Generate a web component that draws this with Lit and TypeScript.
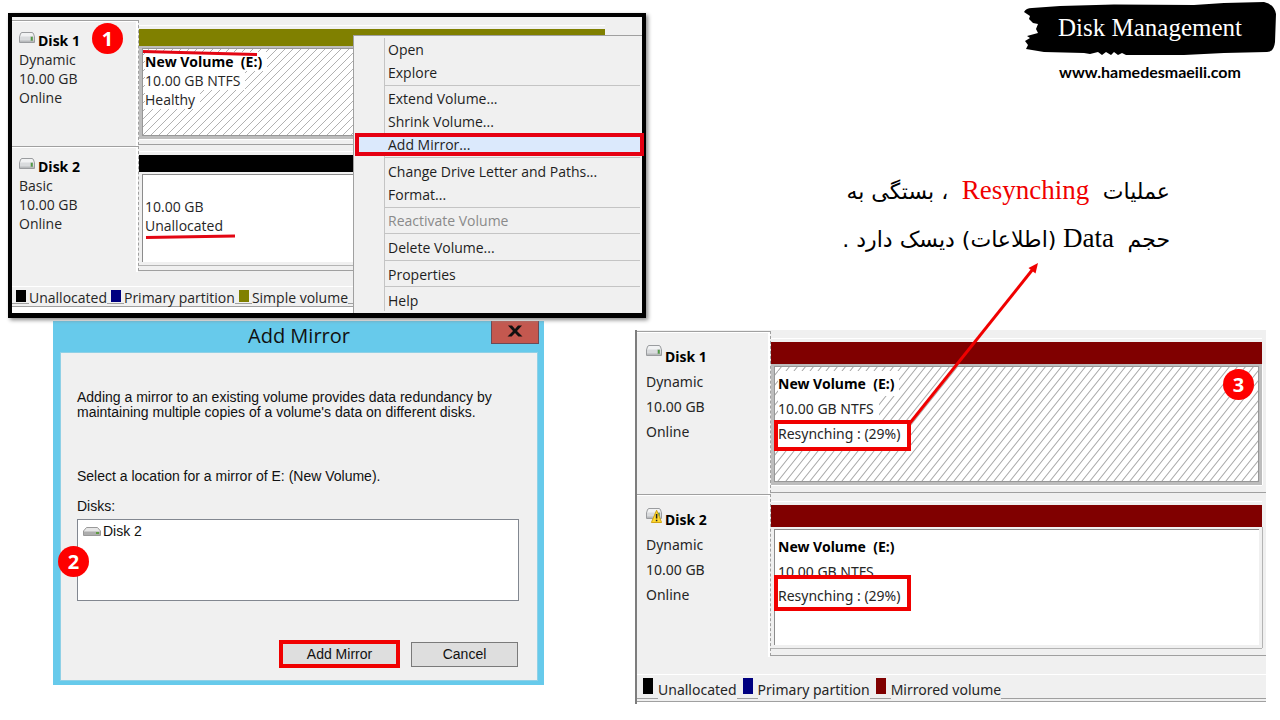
import { LitElement, html, svg, css, nothing } from "lit";
import { customElement, property } from "lit/decorators.js";

interface Volume {
  name?: string;
  size: string;
  status: string;
  color: string;
  selected?: boolean;
  mark?: "tight" | "tall";
}

interface Disk {
  title: string;
  kind: string;
  size: string;
  state: string;
  warning?: boolean;
  volume: Volume;
}

interface LegendEntry {
  label: string;
  color: string;
}

const driveIcon = (warning = false) => html`
  <svg class="drive" viewBox="0 0 16 16" width="16" height="16" aria-hidden="true">
    <path d="M3 1.5H13Q14 1.5 14.6 3L15.5 6V11.5H0.5V6L1.4 3Q2 1.5 3 1.5Z" fill="#f1f2f3" stroke="#9a9c9f" />
    <path d="M1 5.5H15V11H1Z" fill="#d9dbdd" />
    <path d="M1 9.5H15V11H1Z" fill="#b8babc" />
    <rect x="11.5" y="5.5" width="2.5" height="4.5" fill="#8fa88b" />
    <rect x="12.2" y="6" width="1.2" height="3.4" fill="#3f9a34" />
    ${warning
      ? svg`<path d="M10.6 3.2L15.6 15.5H5.4Z" fill="#ffd92e" stroke="#d3a514" stroke-linejoin="round" />
            <path d="M10.6 7V11.6M10.6 12.8V14.2" stroke="#222" stroke-width="1.5" />`
      : nothing}
  </svg>
`;

@customElement("disk-pane")
export class DiskPane extends LitElement {
  @property({ attribute: false }) disks: Disk[] = [];
  @property({ attribute: false }) legend: LegendEntry[] = [];

  static styles = css`
    :host {
      display: block;
      background: #f0f0f0;
      color: #262626;
      font-family: var(--face, "Open Sans", "Noto Sans", sans-serif);
      font-size: 14px;
      line-height: var(--line, 19px);
      white-space: nowrap;
    }
    .row {
      display: grid;
      grid-template-columns: var(--label, 126px) minmax(0, 1fr);
      height: var(--row, 126px);
    }
    .label {
      box-sizing: border-box;
      border-top: 1px solid #a0a0a0;
      box-shadow: inset 0 1px 0 #fff, inset -3px 0 0 -1px #fff;
      padding: var(--label-top, 10px) 0 0 var(--label-left, 7px);
    }
    .title {
      display: flex;
      gap: 3px;
      font-weight: bold;
      color: #000;
    }
    .drive {
      flex: none;
    }
    .graph {
      box-sizing: border-box;
      border-left: 1px dashed #a0a0a0;
      border-bottom: 1px solid #a0a0a0;
      height: calc(100% - 1px);
      padding: var(--graph-top, 9px) var(--graph-right, 4px) 0 0;
      position: relative;
    }
    .graph::before {
      content: "";
      display: block;
      height: 1px;
      margin-top: -4px;
      margin-bottom: 3px;
      background: #fff;
    }
    .bar {
      height: var(--bar, 17px);
    }
    .volume {
      box-sizing: border-box;
      height: var(--volume, 93px);
      border: 1px solid #f0f0f0;
      border-width: 2px 3px 3px 3px;
      background-color: #fff;
      box-shadow: inset 1px 1px 0 #8c8c8c, 0 1px 0 #b4b4b4, 1px 0 0 #b4b4b4;
      padding: var(--volume-top, 4px) 4px 0 var(--volume-left, 3px);
      color: #262626;
    }
    .selected {
      border-color: #bdbdbd;
      box-shadow: inset 0 0 0 1px #979797, 0 1px 0 #fff, 1px 0 0 #fff;
      background-image: url("data:image/svg+xml,%3Csvg xmlns='http://www.w3.org/2000/svg' viewBox='0 0 8 8' preserveAspectRatio='none'%3E%3Cpath d='M-1 9L9 -1M-1 1L1 -1M7 9L9 7' stroke='%23a8a8a8' stroke-width='0.9'/%3E%3C/svg%3E");
      background-size: 8px var(--hatch, 8px);
    }
    .line {
      display: block;
      width: max-content;
      height: var(--line, 19px);
      padding-right: 5px;
      background: #fff;
    }
    .name {
      font-weight: bold;
      color: #000;
      white-space: pre;
    }
    .tight,
    .tall {
      position: relative;
      box-sizing: border-box;
      width: 137px;
      height: 31px;
      border: 4px solid #f00000;
      margin: -1px 0 0 -4px;
      line-height: 19px;
    }
    .tall {
      height: 36px;
      margin-top: -9px;
      padding-top: 7px;
    }
    .legend {
      display: flex;
      align-items: flex-start;
      gap: var(--legend-gap, 4px);
      margin-top: var(--legend-top, 14px);
      padding-left: var(--legend-left, 4px);
      border-top: 1px solid #fff;
      background: linear-gradient(#a0a0a0, #a0a0a0) 0 calc(100% - 2px) / 100% 1px no-repeat;
      border-bottom: 1px solid #a0a0a0;
      height: var(--legend, 19px);
      line-height: var(--legend-line, 21px);
    }
    .entry {
      display: flex;
      gap: var(--legend-space, 3px);
      height: 100%;
    }
    .swatch {
      width: 10px;
      height: var(--swatch-height, 12px);
      margin-top: 3px;
    }
    .text {
      background: #f0f0f0;
    }
  `;

  private renderVolume(v: Volume) {
    return html`
      <div class="bar" style="background:${v.color}"></div>
      <div class="volume ${v.selected ? "selected" : ""}">
        <span class="line name">${v.name ?? " "}</span>
        <span class="line">${v.size}</span>
        <span class="line ${v.mark ?? ""}">${v.status}</span>
      </div>
    `;
  }

  render() {
    return html`
      ${this.disks.map(
        (d) => html`
          <section class="row">
            <div class="label">
              <div class="title">${driveIcon(d.warning)}<span>${d.title}</span></div>
              <div>${d.kind}</div>
              <div>${d.size}</div>
              <div>${d.state}</div>
            </div>
            <div class="graph">${this.renderVolume(d.volume)}</div>
          </section>
        `
      )}
      <div class="legend">
        ${this.legend.map(
          (e) => html`
            <div class="entry">
              <span class="swatch" style="background:${e.color}"></span>
              <span class="text">${e.label}</span>
            </div>
          `
        )}
      </div>
    `;
  }
}

@customElement("volume-menu")
export class VolumeMenu extends LitElement {
  static styles = css`
    :host {
      box-sizing: border-box;
      display: flex;
      flex-direction: column;
      padding: 2px 2px 1px;
      border: 1px solid #a0a0a0;
      border-right: 0;
      border-bottom: 0;
      background: linear-gradient(#c4c4c4, #c4c4c4) 30px 2px / 1px calc(100% - 4px) no-repeat #f0f0f0;
      font-family: "Open Sans", "Noto Sans", sans-serif;
      font-size: 14px;
    }
    .item {
      position: relative;
      flex: 23 1 0;
      min-height: 0;
      border: 0;
      padding: 1px 0 0 32px;
      background: none;
      color: #1e1e1e;
      font: inherit;
      line-height: 20px;
      text-align: left;
    }
    .item:disabled {
      color: #8a8a8a;
    }
    .separator {
      flex: 4 1 0;
      margin-left: 29px;
      background: linear-gradient(#c4c4c4, #c4c4c4) 0 1px / 100% 1px no-repeat;
    }
    .marked {
      background: #dbe9fc;
    }
    .marked::after {
      content: "";
      position: absolute;
      inset: 0 -4px 0 -1px;
      border: 4px solid #e60012;
    }
  `;

  private entries = [
    "Open", "Explore", "-", "Extend Volume...", "Shrink Volume...", "Add Mirror...", "-",
    "Change Drive Letter and Paths...", "Format...", "-", "Reactivate Volume", "-",
    "Delete Volume...", "-", "Properties", "-", "Help",
  ];

  render() {
    return this.entries.map((e) =>
      e === "-"
        ? html`<div class="separator" role="separator"></div>`
        : html`<button
            class="item ${e === "Add Mirror..." ? "marked" : ""}"
            role="menuitem"
            ?disabled=${e === "Reactivate Volume"}
          >${e}</button>`
    );
  }
}

@customElement("mirror-dialog")
export class MirrorDialog extends LitElement {
  static styles = css`
    :host {
      display: block;
      position: relative;
      background: #67caeb;
      padding: 0 7px 5px 8px;
      color: #111;
      font-family: "Liberation Sans", Arial, sans-serif;
      font-size: 14px;
      line-height: 15px;
    }
    .titlebar {
      display: grid;
      grid-template-columns: 46px 1fr 48px;
      height: 32px;
      margin-right: -2px;
    }
    .title {
      grid-column: 2;
      margin: 0;
      font: 20px/29px "Open Sans", "Noto Sans", sans-serif;
      text-align: center;
    }
    .close {
      height: 23px;
      padding: 0;
      border: 1px solid #6b4a55;
      border-top: 0;
      background: #c4584f;
    }
    .close svg {
      display: block;
      margin: -2px auto 0;
    }
    .body {
      display: flex;
      flex-direction: column;
      padding: 37px 18px 12px 16px;
      background: #f0f0f0;
      box-shadow: 0 0 0 1px #8fd0e6;
    }
    .body p {
      margin: 0;
    }
    .select {
      padding-top: 49px;
    }
    .caption {
      padding: 15px 0 5px;
    }
    .list {
      box-sizing: border-box;
      height: 82px;
      margin: 0;
      padding: 4px 5px;
      border: 1px solid #828790;
      background: #fff;
      list-style: none;
    }
    .option {
      display: flex;
      align-items: center;
      gap: 2px;
      height: 15px;
    }
    .actions {
      display: flex;
      justify-content: flex-end;
      align-items: center;
      gap: 11px;
      padding-top: 39px;
    }
    .button {
      box-sizing: border-box;
      width: 107px;
      height: 25px;
      margin-right: 1px;
      padding: 0;
      border: 1px solid #7a7a7a;
      background: #dedede;
      color: inherit;
      font: inherit;
    }
    .marked {
      width: 121px;
      height: 28px;
      margin-right: 0;
      border: 4px solid #f00000;
    }
  `;

  render() {
    return html`
      <header class="titlebar">
        <h2 class="title">Add Mirror</h2>
        <button class="close" aria-label="Close">
          <svg width="16" height="12" viewBox="0 0 16 12" aria-hidden="true">
            <path d="M1 0.5H5L8 4L11 0.5H15L10 6L15.5 11.5H11.4L8 8L4.6 11.5H0.5L6 6Z" fill="#101010" />
          </svg>
        </button>
      </header>
      <div class="body">
        <p>
          Adding a mirror to an existing volume provides data redundancy by<br />
          maintaining multiple copies of a volume's data on different disks.
        </p>
        <p class="select">Select a location for a mirror of E: (New Volume).</p>
        <span class="caption" id="disks">Disks:</span>
        <ul class="list" role="listbox" aria-labelledby="disks">
          <li class="option" role="option">
            <svg width="18" height="9" viewBox="0 0 18 9" aria-hidden="true">
              <path d="M3.5 0.5H14.5L17.5 4V8.5H0.5V4Z" fill="#e6e6e6" stroke="#999" />
              <path d="M1 4.5H17V8H1Z" fill="#adadad" />
              <rect x="13" y="5" width="3" height="2" fill="#5f9c43" />
            </svg>
            <span>Disk 2</span>
          </li>
        </ul>
        <div class="actions">
          <button class="button marked">Add Mirror</button>
          <button class="button">Cancel</button>
        </div>
      </div>
    `;
  }
}

@customElement("app-root")
export class AppRoot extends LitElement {
  static styles = css`
    :host {
      display: block;
      min-height: 100vh;
      background: #fff;
    }
    .slide {
      position: relative;
      display: grid;
      grid-template-columns: minmax(0, 646fr) minmax(0, 634fr);
      align-items: start;
    }
    .left {
      display: flex;
      flex-direction: column;
      padding: 13px 0 0 8px;
    }
    .first {
      position: relative;
      z-index: 1;
      border: 4px solid #000;
      border-bottom-width: 5px;
      background: #fff;
      box-shadow: 2px 2px 4px #888;
    }
    .first-pane {
      padding-top: 3px;
      margin-bottom: 6px;
      --graph-right: 37px;
    }
    .menu {
      position: absolute;
      inset: 18px 0 0 auto;
      width: 289px;
    }
    .strokes {
      position: absolute;
      inset: 0 auto auto 0;
      pointer-events: none;
    }
    .dialog {
      margin: 3px 102px 0 45px;
    }
    .stage {
      position: relative;
    }
    .badge {
      position: absolute;
      width: 31px;
      height: 31px;
      border-radius: 50%;
      background: #fe0000;
      color: #fff;
      font: bold 20px/31px "Open Sans", "Noto Sans", sans-serif;
      text-align: center;
    }
    .one {
      left: 80px;
      top: 6px;
    }
    .two {
      left: 50px;
      top: 228px;
    }
    .three {
      right: 12px;
      top: 39px;
    }
    .right {
      display: flex;
      flex-direction: column;
      padding-right: 14px;
    }
    .brand {
      position: relative;
      align-self: flex-end;
      width: 252px;
      margin: 2px -10px 0 0;
      text-align: center;
    }
    .brush {
      position: absolute;
      inset: 0 auto auto 0;
    }
    .heading {
      position: relative;
      height: 60px;
      margin: 0;
      color: #fff;
      font: 25px/51px "Liberation Serif", serif;
    }
    .site {
      display: block;
      color: #000;
      font: bold 16px/20px Lato, "Open Sans", sans-serif;
      text-decoration: none;
    }
    .note {
      margin: 84px 96px 68px 0;
      color: #000;
      font: 27px/48px "Liberation Serif", serif;
      white-space: pre;
    }
    .note p {
      margin: 0;
      height: 48px;
    }
    .fa {
      font: 22px/48px "DejaVu Sans", sans-serif;
    }
    .red {
      color: #f00000;
    }
    .third {
      position: relative;
      margin-left: -11px;
      border-left: 2px solid #7d7d7d;
      background: #fff;
    }
    .third-pane {
      padding-top: 1px;
      margin-bottom: 2px;
      --face: "Noto Sans", "Open Sans", sans-serif;
      --line: 25px;
      --label: 133px;
      --row: 163px;
      --label-top: 12px;
      --label-left: 9px;
      --graph-top: 11px;
      --bar: 22px;
      --volume: 121px;
      --volume-top: 5px;
      --volume-left: 4px;
      --hatch: 10px;
      --legend-top: 17px;
      --legend: 26px;
      --legend-left: 6px;
      --legend-gap: 6px;
      --legend-line: 29px;
      --legend-space: 5px;
      --swatch-height: 16px;
    }
    .arrow {
      position: absolute;
      right: 226px;
      top: -68px;
      pointer-events: none;
    }
  `;

  private before: Disk[] = [
    {
      title: "Disk 1", kind: "Dynamic", size: "10.00 GB", state: "Online",
      volume: { name: "New Volume  (E:)", size: "10.00 GB NTFS", status: "Healthy", color: "#808000", selected: true },
    },
    {
      title: "Disk 2", kind: "Basic", size: "10.00 GB", state: "Online",
      volume: { size: "10.00 GB", status: "Unallocated", color: "#000" },
    },
  ];

  private after: Disk[] = [
    {
      title: "Disk 1", kind: "Dynamic", size: "10.00 GB", state: "Online",
      volume: { name: "New Volume  (E:)", size: "10.00 GB NTFS", status: "Resynching : (29%)", color: "#800000", selected: true, mark: "tight" },
    },
    {
      title: "Disk 2", kind: "Dynamic", size: "10.00 GB", state: "Online", warning: true,
      volume: { name: "New Volume  (E:)", size: "10.00 GB NTFS", status: "Resynching : (29%)", color: "#800000", mark: "tall" },
    },
  ];

  private legendFor(label: string, color: string): LegendEntry[] {
    return [
      { label: "Unallocated", color: "#000" },
      { label: "Primary partition", color: "#000080" },
      { label, color },
    ];
  }

  render() {
    return html`
      <main class="slide">
        <div class="left">
          <section class="first">
            <disk-pane class="first-pane" .disks=${this.before} .legend=${this.legendFor("Simple volume", "#808000")}></disk-pane>
            <svg class="strokes" width="340" height="240" viewBox="0 0 340 240" aria-hidden="true">
              <path d="M131 34.5L245 37.5M134 220.5L223 219" stroke="#e30613" stroke-width="3" fill="none" />
            </svg>
            <volume-menu class="menu" role="menu"></volume-menu>
            <span class="badge one">1</span>
          </section>
          <div class="stage">
            <mirror-dialog class="dialog"></mirror-dialog>
            <span class="badge two">2</span>
          </div>
        </div>
        <div class="right">
          <header class="brand">
            <svg class="brush" width="252" height="54" viewBox="0 0 252 54" aria-hidden="true">
              <path
                d="M0 10Q2 6 8 6L36 4L90 2.5L170 3L200 1L240 0Q250 2 252 12L251 40Q250 50 243 50L200 51L160 53L102 53L98 51L94 53L90 50L87 53L82 50L78 53L74 50L66 52L60 51L20 50L2 47L4 43L1 39L6 36L3 34L14 31L12 27L14 22L9 21L5 17L6 14Z"
                fill="#000"
              />
            </svg>
            <h1 class="heading">Disk Management</h1>
            <a class="site" href="http://www.hamedesmaeili.com">www.hamedesmaeili.com</a>
          </header>
          <div class="note" dir="rtl" lang="fa"><p><span class="fa">عملیات</span>  <span class="red" dir="ltr">Resynching</span>  <span class="fa">، بستگی به</span></p><p><span class="fa">حجم</span>  Data <span class="fa">(اطلاعات) دیسک دارد .</span></p></div>
          <section class="third">
            <disk-pane class="third-pane" .disks=${this.after} .legend=${this.legendFor("Mirrored volume", "#800000")}></disk-pane>
            <svg class="arrow" width="132" height="164" viewBox="0 0 132 164" aria-hidden="true">
              <path d="M2 161L125 7" stroke="#f00000" stroke-width="3" />
              <path d="M130 1L127.5 11.5L120.5 6Z" fill="#f00000" />
            </svg>
            <span class="badge three">3</span>
          </section>
        </div>
      </main>
    `;
  }
}
